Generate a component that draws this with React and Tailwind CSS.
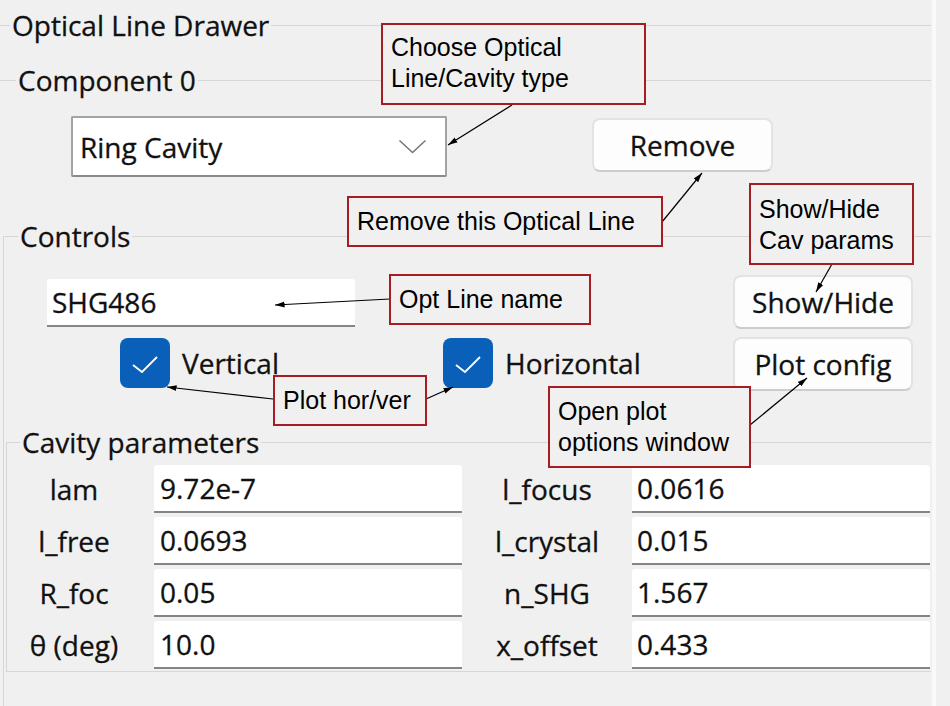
import React from 'react';

const line = 'border-[#d6d6d6]';

const GroupTitle = ({ title, lead, corner, className = '' }) => (
    <div className={`flex h-[36px] ${className}`}>
        <div className={`${lead} self-end h-[18px] border-t ${line} ${corner ? 'border-l' : ''}`} />
        <span className="px-[2px] leading-[36px] whitespace-nowrap">{title}</span>
        <div className={`flex-1 self-end h-[18px] border-t ${line}`} />
    </div>
);

const Field = ({ value, className = '' }) => (
    <div className={`bg-white rounded-t-[3px] border-b-2 border-[#858585] flex items-center ${className}`}>
        {value}
    </div>
);

const Button = ({ label, className = '' }) => (
    <div className={`bg-[#fdfdfd] rounded-[8px] border-2 border-[#e3e3e3] border-b-[#cdcdcd] flex items-center justify-center ${className}`}>
        {label}
    </div>
);

const Check = () => (
    <div className="w-[50px] h-[50px] rounded-[8px] bg-[#0a5fb8] flex items-center justify-center shrink-0">
        <svg width="50" height="50" viewBox="0 0 50 50">
            <polyline points="13,27 22,34 37,19" fill="none" stroke="#fff" strokeWidth="1.8" />
        </svg>
    </div>
);

const Note = ({ className = '', children }) => (
    <div className={`absolute border-2 border-[#a51d23] bg-[#f0f0f0] font-['Liberation_Sans',Arial,sans-serif] text-[25px] leading-[31px] text-black whitespace-nowrap [-webkit-text-stroke:0px] ${className}`}>
        {children}
    </div>
);

const params = [
    ['lam', '9.72e-7', 'l_focus', '0.0616'],
    ['l_free', '0.0693', 'l_crystal', '0.015'],
    ['R_foc', '0.05', 'n_SHG', '1.567'],
    ['θ (deg)', '10.0', 'x_offset', '0.433'],
];

export default function App() {
    return (
        <div className="w-[950px] h-[706px] bg-[#f0f0f0] flex overflow-hidden relative font-['Open_Sans','Noto_Sans',sans-serif] text-[28px] text-[#111] [-webkit-text-stroke:0.3px_#111]">
            {/* main column */}
            <div className="w-[931px] shrink-0 flex flex-col">
                <GroupTitle title="Optical Line Drawer" lead="w-[10px]" className="mt-[7px]" />
                <GroupTitle title="Component 0" lead="w-[16px]" className="mt-[19px]" />

                <div className="flex items-start mt-[18px]">
                    <div className="ml-[71px] w-[376px] h-[61px] bg-white border-2 border-[#a3a3a3] border-b-[#8a8a8a] rounded-[2px] flex items-center pl-[7px] pr-[18px] justify-between">
                        <span>Ring Cavity</span>
                        <svg width="29" height="15" viewBox="0 0 29 15">
                            <polyline points="1.5,1.5 14.5,13.5 27.5,1.5" fill="none" stroke="#777" strokeWidth="1.6" />
                        </svg>
                    </div>
                    <Button label="Remove" className="ml-[145px] mt-[2px] w-[181px] h-[54px]" />
                </div>

                {/* Controls */}
                <GroupTitle title="Controls" lead="w-[15px]" corner className="mt-[41px] ml-[3px]" />
                <div className={`ml-[3px] flex-1 border-l ${line} flex flex-col`}>
                    <div className="flex pt-[21px]">
                        <div className="w-[729px] flex flex-col">
                            <Field value="SHG486" className="mt-[4px] ml-[43px] w-[308px] h-[48px] pl-[5px]" />
                            <div className="flex mt-[11px] pl-[116px] h-[50px] items-center">
                                <div className="w-[323px] flex items-center gap-[12px]">
                                    <Check />
                                    <span>Vertical</span>
                                </div>
                                <div className="flex items-center gap-[12px]">
                                    <Check />
                                    <span>Horizontal</span>
                                </div>
                            </div>
                        </div>
                        <div className="w-[180px] flex flex-col gap-[8px]">
                            <Button label="Show/Hide" className="h-[54px]" />
                            <Button label="Plot config" className="h-[54px]" />
                        </div>
                    </div>

                    {/* Cavity parameters */}
                    <GroupTitle title="Cavity parameters" lead="w-[14px]" corner className="mt-[33px] ml-[2px]" />
                    <div className={`ml-[2px] border-l border-b ${line} pt-[5px] pb-[2px]`}>
                        <div className="grid grid-cols-[134px_13px_308px_170px_298px] gap-y-[4px]">
                            {params.map(([la, va, lb, vb]) => (
                                <React.Fragment key={la}>
                                    <div className="h-[48px] flex items-center justify-center">{la}</div>
                                    <div />
                                    <Field value={va} className="h-[48px] pl-[6px]" />
                                    <div className="h-[48px] flex items-center justify-center">{lb}</div>
                                    <Field value={vb} className="h-[48px] pl-[5px]" />
                                </React.Fragment>
                            ))}
                        </div>
                    </div>
                </div>
            </div>
            <div className="w-[4px] ml-[1px] bg-[#f9f9f9]" />
            <div className="flex-1" />

            {/* annotation arrows */}
            <svg className="absolute inset-0 pointer-events-none" width="950" height="706">
                <defs>
                    <marker id="ah" viewBox="0 0 10 10" refX="10" refY="5" markerWidth="8" markerHeight="8" orient="auto">
                        <path d="M0,2 L10,5 L0,8 z" fill="#000" />
                    </marker>
                </defs>
                <g stroke="#000" strokeWidth="1.2" markerEnd="url(#ah)">
                    <line x1="512" y1="105" x2="448" y2="145" />
                    <line x1="662" y1="222" x2="702" y2="173" />
                    <line x1="832" y1="264" x2="816" y2="292" />
                    <line x1="390" y1="299" x2="275" y2="305" />
                    <line x1="273" y1="399" x2="167" y2="387" />
                    <line x1="426" y1="399" x2="453" y2="387" />
                    <line x1="750" y1="425" x2="807" y2="378" />
                </g>
            </svg>

            <Note className="left-[381px] top-[23px] w-[265px] h-[82px] pl-[8px] pt-[7px]">
                Choose Optical<br />Line/Cavity type
            </Note>
            <Note className="left-[347px] top-[196px] w-[316px] h-[51px] pl-[8px] flex items-center">
                Remove this Optical Line
            </Note>
            <Note className="left-[749px] top-[183px] w-[165px] h-[82px] pl-[8px] pt-[9px]">
                Show/Hide<br />Cav params
            </Note>
            <Note className="left-[389px] top-[274px] w-[202px] h-[51px] pl-[8px] flex items-center">
                Opt Line name
            </Note>
            <Note className="left-[273px] top-[375px] w-[154px] h-[51px] pl-[8px] flex items-center">
                Plot hor/ver
            </Note>
            <Note className="left-[548px] top-[386px] w-[203px] h-[82px] pl-[8px] pt-[8px]">
                Open plot<br />options window
            </Note>
        </div>
    );
}
